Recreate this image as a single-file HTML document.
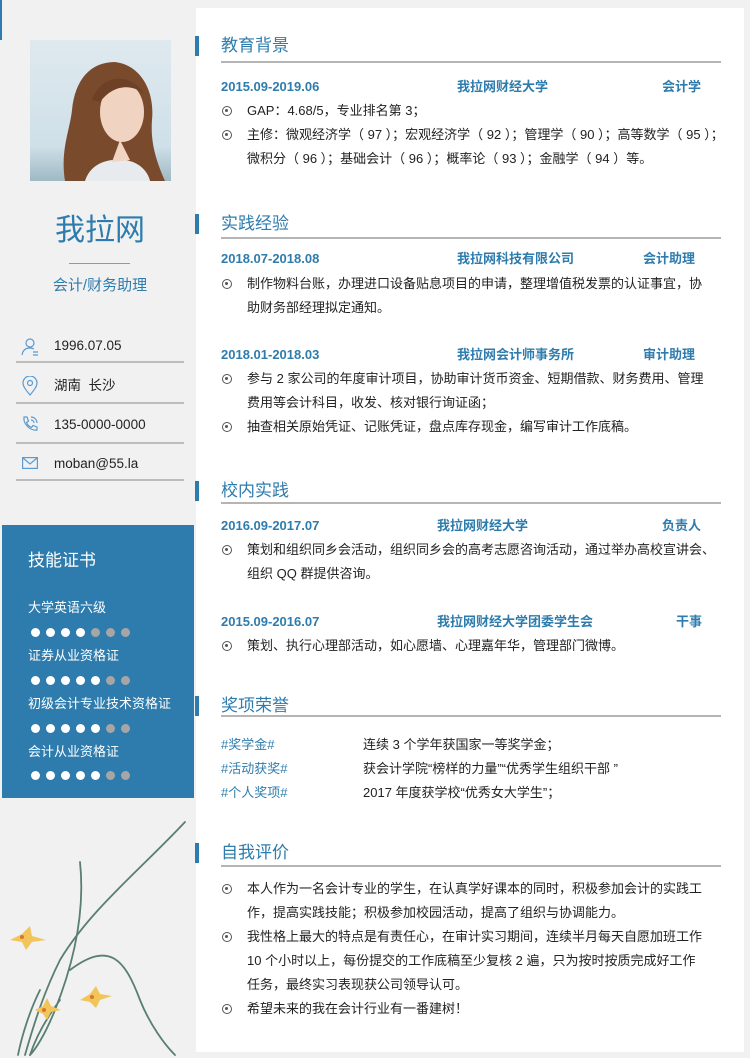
<!DOCTYPE html>
<html><head><meta charset="utf-8"><style>
*{margin:0;padding:0;box-sizing:border-box}
body{width:750px;height:1058px;background:#f1f1f1;position:relative;overflow:hidden;font-family:"Liberation Sans","Noto Sans CJK SC",sans-serif;color:#222;font-size:13px}
.a{position:absolute;white-space:nowrap;line-height:18px}
.main{position:absolute;left:196px;top:8px;width:548px;height:1044px;background:#fff}
.bar{position:absolute;left:195px;width:4px;height:20px;background:#2e7cad}
.h{position:absolute;left:221px;font-size:17px;color:#2e7cad;line-height:20px}
.hl{position:absolute;left:221px;width:500px;height:2px;background:#b5b5b5}
.b{font-weight:bold;color:#2e7cad}
.bu{position:absolute;left:222px;width:10px;height:10px;border:1.3px solid #555;border-radius:50%}
.bu:after{content:"";position:absolute;left:2.3px;top:2.3px;width:3px;height:3px;background:#555;border-radius:50%}
.t{left:247px}
.c{color:#2e7cad}
.ln{position:absolute;left:16px;width:168px;height:2px;background:#bdbdbd}
.sk{position:absolute;left:2px;top:525px;width:192px;height:273px;background:#2e7cad}
.w{color:#fff}
.dot{position:absolute;width:9px;height:9px;border-radius:50%}
</style></head><body>
<div style="position:absolute;left:0;top:0;width:2px;height:40px;background:#2e7cad"></div>
<div class="main"></div>

<svg class="a" style="left:30px;top:40px" width="141" height="141" viewBox="0 0 141 141">
<defs><linearGradient id="sky" x1="0" y1="0" x2="0" y2="1"><stop offset="0" stop-color="#dfe9ef"/><stop offset="0.75" stop-color="#cfe0e8"/><stop offset="1" stop-color="#9fb9c4"/></linearGradient></defs>
<rect width="141" height="141" fill="url(#sky)"/>
<path d="M35 141 C30 110 40 90 42 70 C45 40 60 22 85 22 C110 25 125 50 122 80 C120 105 128 125 135 141Z" fill="#7a4a2c"/>
<path d="M55 141 C60 125 75 118 95 120 C110 122 118 132 120 141Z" fill="#e8ebee"/>
<ellipse cx="92" cy="72" rx="22" ry="30" fill="#f1d3c1"/>
<path d="M62 60 C70 35 100 30 115 55 C105 45 85 42 70 62Z" fill="#6e4026"/>
<path d="M90 100 L100 120 L82 122Z" fill="#f1d3c1"/>
</svg>

<div class="a" style="left:0;width:200px;text-align:center;top:212px;font-size:30px;line-height:38px;color:#2e7cad">我拉网</div>
<div style="position:absolute;left:69px;top:263px;width:61px;height:1px;background:#999"></div>
<div class="a c" style="left:0;width:200px;text-align:center;top:277px;font-size:15px">会计/财务助理</div>

<svg class="a" style="left:20px;top:337px" width="20" height="20" viewBox="0 0 20 20" fill="none" stroke="#5b9bd0" stroke-width="1.2"><circle cx="10" cy="6" r="4"/><path d="M2 18 C3 12 7 11 10 11 C12 11 13 11.5 14 12"/><path d="M13 15h5M13 18h5"/></svg>
<div class="a" style="left:54px;top:337px;font-size:13.5px">1996.07.05</div>
<div class="ln" style="top:361px"></div>
<svg class="a" style="left:22px;top:376px" width="16" height="20" viewBox="0 0 16 20" fill="none" stroke="#5b9bd0" stroke-width="1.2"><path d="M8 19 C3 13 1 10 1 7 A7 7 0 0 1 15 7 C15 10 13 13 8 19Z"/><circle cx="8" cy="7" r="2.5"/></svg>
<div class="a" style="left:54px;top:377px;font-size:13.5px">湖南&nbsp;&nbsp;长沙</div>
<div class="ln" style="top:402px"></div>
<svg class="a" style="left:21px;top:415px" width="18" height="18" viewBox="0 0 18 18" fill="none" stroke="#5b9bd0" stroke-width="1.2"><path d="M3 2 L6 2 L7.5 6 L5.5 7.5 C6.5 10 8 11.5 10.5 12.5 L12 10.5 L16 12 L16 15 C9 16 2 9 3 2Z"/><path d="M10 2 A6 6 0 0 1 16 8M10 5 A3 3 0 0 1 13 8"/></svg>
<div class="a" style="left:54px;top:416px;font-size:13.5px">135-0000-0000</div>
<div class="ln" style="top:442px"></div>
<svg class="a" style="left:22px;top:457px" width="16" height="12" viewBox="0 0 16 12" fill="none" stroke="#5b9bd0" stroke-width="1.2"><rect x="0.6" y="0.6" width="14.8" height="10.8"/><path d="M1 1 L8 7 L15 1"/></svg>
<div class="a" style="left:54px;top:455px;font-size:13.5px">moban@55.la</div>
<div class="ln" style="top:479px"></div>

<div class="sk"></div>
<div class="a w" style="left:28px;top:551px;font-size:17px;line-height:20px">技能证书</div>
<div class="a w" style="left:28px;top:599px;font-size:13px">大学英语六级</div>
<div class="a w" style="left:28px;top:647px;font-size:13px">证券从业资格证</div>
<div class="a w" style="left:28px;top:695px;font-size:13px">初级会计专业技术资格证</div>
<div class="a w" style="left:28px;top:743px;font-size:13px">会计从业资格证</div>

<svg class="a" style="left:0;top:810px" width="195" height="248" viewBox="0 0 195 248" fill="none" stroke-linecap="round">
<g stroke="#3f6a5c" stroke-width="1.8" opacity="0.85">
<path d="M185 12 C140 60 90 100 60 150 C45 180 35 210 25 245"/>
<path d="M80 52 C85 100 75 150 55 200 C45 225 35 240 30 245"/>
<path d="M70 160 C110 130 125 150 140 190 C150 215 165 235 175 245"/>
<path d="M40 180 C30 200 22 225 18 245"/>
<path d="M60 190 C45 210 35 230 30 245"/>
</g>
<g fill="#f2c55a" stroke="none">
<path d="M10 130 l12 -6 l8 -8 l2 10 l14 4 l-14 2 l-6 8 l-4 -8z"/>
<path d="M80 190 l10 -6 l6 -8 l4 8 l12 2 l-12 4 l-4 8 l-6 -6z"/>
<path d="M35 200 l8 -4 l4 -8 l4 8 l10 4 l-10 2 l-4 8 l-4 -6z"/>
</g>
<g fill="#d9762e"><circle cx="22" cy="127" r="2"/><circle cx="92" cy="187" r="2"/><circle cx="44" cy="200" r="2"/></g>
</svg>

<div class="bar" style="top:36px"></div>
<div class="h" style="top:36px">教育背景</div>
<div class="hl" style="top:61px"></div>
<div class="a b" style="left:221px;top:78px">2015.09-2019.06</div>
<div class="a b" style="left:457px;top:78px">我拉网财经大学</div>
<div class="a b" style="left:662px;top:78px">会计学</div>
<div class="bu" style="top:106px"></div><div class="a t" style="top:102px">GAP：4.68/5，专业排名第 3；</div>
<div class="bu" style="top:130px"></div><div class="a t" style="top:126px">主修：微观经济学（ 97 ）；宏观经济学（ 92 ）；管理学（ 90 ）；高等数学（ 95 ）；</div>
<div class="a t" style="top:150px">微积分（ 96 ）；基础会计（ 96 ）；概率论（ 93 ）；金融学（ 94 ）等。</div>

<div class="bar" style="top:214px"></div>
<div class="h" style="top:214px">实践经验</div>
<div class="hl" style="top:237px"></div>
<div class="a b" style="left:221px;top:250px">2018.07-2018.08</div>
<div class="a b" style="left:457px;top:250px">我拉网科技有限公司</div>
<div class="a b" style="left:643px;top:250px">会计助理</div>
<div class="bu" style="top:279px"></div><div class="a t" style="top:275px">制作物料台账，办理进口设备贴息项目的申请，整理增值税发票的认证事宜，协</div>
<div class="a t" style="top:299px">助财务部经理拟定通知。</div>
<div class="a b" style="left:221px;top:346px">2018.01-2018.03</div>
<div class="a b" style="left:457px;top:346px">我拉网会计师事务所</div>
<div class="a b" style="left:643px;top:346px">审计助理</div>
<div class="bu" style="top:374px"></div><div class="a t" style="top:370px">参与 2 家公司的年度审计项目，协助审计货币资金、短期借款、财务费用、管理</div>
<div class="a t" style="top:394px">费用等会计科目，收发、核对银行询证函；</div>
<div class="bu" style="top:422px"></div><div class="a t" style="top:418px">抽查相关原始凭证、记账凭证，盘点库存现金，编写审计工作底稿。</div>

<div class="bar" style="top:481px"></div>
<div class="h" style="top:481px">校内实践</div>
<div class="hl" style="top:502px"></div>
<div class="a b" style="left:221px;top:517px">2016.09-2017.07</div>
<div class="a b" style="left:437px;top:517px">我拉网财经大学</div>
<div class="a b" style="left:662px;top:517px">负责人</div>
<div class="bu" style="top:545px"></div><div class="a t" style="top:541px">策划和组织同乡会活动，组织同乡会的高考志愿咨询活动，通过举办高校宣讲会、</div>
<div class="a t" style="top:565px">组织 QQ 群提供咨询。</div>
<div class="a b" style="left:221px;top:613px">2015.09-2016.07</div>
<div class="a b" style="left:437px;top:613px">我拉网财经大学团委学生会</div>
<div class="a b" style="left:676px;top:613px">干事</div>
<div class="bu" style="top:641px"></div><div class="a t" style="top:637px">策划、执行心理部活动，如心愿墙、心理嘉年华，管理部门微博。</div>

<div class="bar" style="top:696px"></div>
<div class="h" style="top:696px">奖项荣誉</div>
<div class="hl" style="top:715px"></div>
<div class="a c" style="left:221px;top:736px">#奖学金#</div><div class="a" style="left:363px;top:736px">连续 3 个学年获国家一等奖学金；</div>
<div class="a c" style="left:221px;top:760px">#活动获奖#</div><div class="a" style="left:363px;top:760px">获会计学院“榜样的力量”“优秀学生组织干部 ”</div>
<div class="a c" style="left:221px;top:784px">#个人奖项#</div><div class="a" style="left:363px;top:784px">2017 年度获学校“优秀女大学生”；</div>

<div class="bar" style="top:843px"></div>
<div class="h" style="top:843px">自我评价</div>
<div class="hl" style="top:865px"></div>
<div class="bu" style="top:884px"></div><div class="a t" style="top:880px">本人作为一名会计专业的学生，在认真学好课本的同时，积极参加会计的实践工</div>
<div class="a t" style="top:904px">作，提高实践技能；积极参加校园活动，提高了组织与协调能力。</div>
<div class="bu" style="top:932px"></div><div class="a t" style="top:928px">我性格上最大的特点是有责任心，在审计实习期间，连续半月每天自愿加班工作</div>
<div class="a t" style="top:952px">10 个小时以上，每份提交的工作底稿至少复核 2 遍，只为按时按质完成好工作</div>
<div class="a t" style="top:976px">任务，最终实习表现获公司领导认可。</div>
<div class="bu" style="top:1004px"></div><div class="a t" style="top:1000px">希望未来的我在会计行业有一番建树！</div>

<div class="dot" style="left:31px;top:628px;background:#fff"></div><div class="dot" style="left:46px;top:628px;background:#fff"></div><div class="dot" style="left:61px;top:628px;background:#fff"></div><div class="dot" style="left:76px;top:628px;background:#fff"></div><div class="dot" style="left:91px;top:628px;background:#a6a6a6"></div><div class="dot" style="left:106px;top:628px;background:#a6a6a6"></div><div class="dot" style="left:121px;top:628px;background:#a6a6a6"></div>
<div class="dot" style="left:31px;top:676px;background:#fff"></div><div class="dot" style="left:46px;top:676px;background:#fff"></div><div class="dot" style="left:61px;top:676px;background:#fff"></div><div class="dot" style="left:76px;top:676px;background:#fff"></div><div class="dot" style="left:91px;top:676px;background:#fff"></div><div class="dot" style="left:106px;top:676px;background:#a6a6a6"></div><div class="dot" style="left:121px;top:676px;background:#a6a6a6"></div>
<div class="dot" style="left:31px;top:724px;background:#fff"></div><div class="dot" style="left:46px;top:724px;background:#fff"></div><div class="dot" style="left:61px;top:724px;background:#fff"></div><div class="dot" style="left:76px;top:724px;background:#fff"></div><div class="dot" style="left:91px;top:724px;background:#fff"></div><div class="dot" style="left:106px;top:724px;background:#a6a6a6"></div><div class="dot" style="left:121px;top:724px;background:#a6a6a6"></div>
<div class="dot" style="left:31px;top:771px;background:#fff"></div><div class="dot" style="left:46px;top:771px;background:#fff"></div><div class="dot" style="left:61px;top:771px;background:#fff"></div><div class="dot" style="left:76px;top:771px;background:#fff"></div><div class="dot" style="left:91px;top:771px;background:#fff"></div><div class="dot" style="left:106px;top:771px;background:#a6a6a6"></div><div class="dot" style="left:121px;top:771px;background:#a6a6a6"></div>
</body></html>
